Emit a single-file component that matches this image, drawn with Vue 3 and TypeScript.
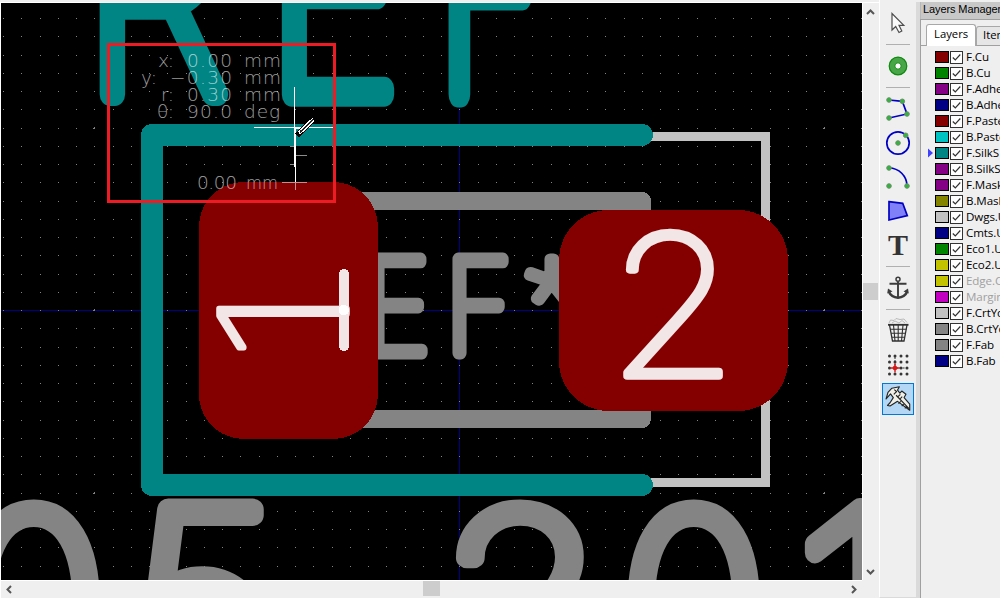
<script setup lang="ts">
import { computed } from 'vue'

interface Glyph {
  ch: string
  // box of the stroke centre lines
  x: number
  y: number
  w: number
  h: number
  pen: number
  kind: 'silk' | 'fab' | 'pad'
  family?: string
  rotate?: boolean
}

interface Layer {
  name: string
  color: string
  dim?: boolean
  active?: boolean
}

const glyphs: Glyph[] = [
  { ch: 'R', x: 112.5, y: -103.5, w: 104, h: 193.5, pen: 27, kind: 'silk' },
  { ch: 'E', x: 294.5, y: -103.5, w: 87, h: 194, pen: 27, kind: 'silk' },
  { ch: 'F', x: 459.5, y: -103.5, w: 69, h: 193.5, pen: 27, kind: 'silk' },
  { ch: '0', x: -20, y: 510.5, w: 108, h: 181, pen: 27, kind: 'fab' },
  { ch: '5', x: 155, y: 511.5, w: 102, h: 181, pen: 27, kind: 'fab' },
  { ch: '2', x: 464, y: 510.5, w: 116, h: 181, pen: 27, kind: 'fab' },
  { ch: '0', x: 640, y: 510.5, w: 108, h: 181, pen: 27, kind: 'fab' },
  { ch: '1', x: 817, y: 511.5, w: 51, h: 220, pen: 27, kind: 'fab' },
  { ch: 'E', x: 377.5, y: 260.5, w: 43, h: 90.5, pen: 14.7, kind: 'fab' },
  { ch: 'F', x: 459.5, y: 260.5, w: 43, h: 90.5, pen: 14.7, kind: 'fab' },
  { ch: '*', x: 530.5, y: 260.5, w: 40, h: 38, pen: 14.7, kind: 'fab', family: 'Roboto' }
]

const padNumbers: Glyph[] = [
  { ch: '1', x: 220, y: 310, w: 124, h: 36, pen: 10, kind: 'pad', rotate: true },
  { ch: '2', x: 627.5, y: 233, w: 88, h: 140, pen: 12, kind: 'pad' }
]

const ctx = document.createElement('canvas').getContext('2d')!

function fit(g: Glyph) {
  const family = `${g.family ?? 'Inter'}, Roboto, 'DejaVu Sans', sans-serif`
  ctx.font = `100 1000px ${family}`
  const bar = ctx.measureText('I')
  const stem = bar.actualBoundingBoxRight + bar.actualBoundingBoxLeft
  const m = ctx.measureText(g.ch)
  const left = -m.actualBoundingBoxLeft + stem / 2
  const top = -m.actualBoundingBoxAscent + stem / 2
  const inkW = m.actualBoundingBoxRight + m.actualBoundingBoxLeft - stem
  const inkH = m.actualBoundingBoxDescent + m.actualBoundingBoxAscent - stem
  const sx = (g.rotate ? g.h : g.w) / inkW
  const sy = (g.rotate ? g.w : g.h) / inkH
  const origin = g.rotate
    ? `translate(${g.x} ${g.y + g.h}) rotate(-90)`
    : `translate(${g.x} ${g.y})`
  return {
    ...g,
    family,
    transform: `${origin} scale(${sx} ${sy}) translate(${-left} ${-top})`,
    pen: g.pen - 0.65 * stem * (sx + sy) / 2
  }
}

const boardText = glyphs.map(fit)
const padText = padNumbers.map(fit)

const gridDots = computed(() => {
  let d = ''
  for (let i = 0; i < 48; i++) {
    for (let j = 0; j < 31; j++) {
      const x = Math.floor(3.5 + 18.25 * i)
      const y = Math.floor(18.5 + 18.25 * j)
      d += `M${x} ${y}h1v1h-1z`
      if (i % 20 === 5 && j % 10 === 6) d += `M${x - 1} ${y}h2v1h-2zM${x} ${y - 1}h1v1h-1z`
    }
  }
  return d
})

const layers: Layer[] = [
  { name: 'F.Cu', color: '#840000' },
  { name: 'B.Cu', color: '#008400' },
  { name: 'F.Adhes', color: '#840084' },
  { name: 'B.Adhes', color: '#000084' },
  { name: 'F.Paste', color: '#840000' },
  { name: 'B.Paste', color: '#00c2c2' },
  { name: 'F.SilkS', color: '#008484', active: true },
  { name: 'B.SilkS', color: '#840084' },
  { name: 'F.Mask', color: '#840084' },
  { name: 'B.Mask', color: '#848400' },
  { name: 'Dwgs.User', color: '#c2c2c2' },
  { name: 'Cmts.User', color: '#000084' },
  { name: 'Eco1.User', color: '#008400' },
  { name: 'Eco2.User', color: '#c2c200' },
  { name: 'Edge.Cuts', color: '#c2c200', dim: true },
  { name: 'Margin', color: '#c200c2', dim: true },
  { name: 'F.CrtYd', color: '#c2c2c2' },
  { name: 'B.CrtYd', color: '#848484' },
  { name: 'F.Fab', color: '#848484' },
  { name: 'B.Fab', color: '#000084' }
]

const cols = [7.5, 13, 19, 25]
const rows = [7, 13, 19, 25]
</script>

<template>
  <div class="app">
    <div class="editor">
      <svg class="canvas" viewBox="1 3 861 577" width="861" height="577">
        <path class="axis" d="M1 310.5H862M459.5 3V580" />
        <path class="dots" :d="gridDots" />
        <path class="fab-line" d="M360 201H642V419H360" />
        <path class="court" d="M640 136.5H765.5V482.5H640" />
        <text
          v-for="(g, i) in boardText"
          :key="i"
          class="stroke-text"
          :class="g.kind"
          :font-family="g.family"
          :stroke-width="g.pen"
          :transform="g.transform"
        >{{ g.ch }}</text>
        <path class="silk-line" d="M642 135H152V485H642" />
        <rect class="pad-shape" x="199" y="182" width="179" height="257" rx="45" />
        <rect class="pad-shape" x="559" y="210" width="229" height="201" rx="50" />
        <text
          v-for="(g, i) in padText"
          :key="'p' + i"
          class="stroke-text"
          :class="g.kind"
          :font-family="g.family"
          :stroke-width="g.pen"
          :transform="g.transform"
        >{{ g.ch }}</text>
        <path class="pad-foot" d="M344 274V346" />
        <path class="pad-joint" d="M343.500 310H344" />
        <g class="readout">
          <text x="158" y="67" textLength="16">x:</text>
          <text x="187" y="67" textLength="45">0.00</text>
          <text x="244" y="67" textLength="37">mm</text>
          <text x="141" y="84" textLength="16">y:</text>
          <text x="170" y="84" textLength="62">−0.30</text>
          <text x="244" y="84" textLength="37">mm</text>
          <text x="161" y="101" textLength="13">r:</text>
          <text x="187" y="101" textLength="45">0.30</text>
          <text x="244" y="101" textLength="37">mm</text>
          <text x="157" y="118" textLength="17">θ:</text>
          <text x="187" y="118" textLength="45">90.0</text>
          <text x="244" y="118" textLength="36">deg</text>
          <text x="197" y="189" textLength="40">0.00</text>
          <text x="246" y="189" textLength="32" lengthAdjust="spacingAndGlyphs">mm</text>
        </g>
        <path class="ruler-dim" d="M290 146.5H294M296 155.5H307M290 164.5H294M282 182.5H307M295.5 183V190" />
        <path class="cross" d="M294.5 87V167M254 127.5H333M295.5 128V182M294 128.5H302" />
        <path class="pencil-edge" d="M297 135.500L313 119.500" />
        <path class="pencil" d="M299 133L313.500 119.500" />
        <path class="pencil-core" d="M300 132L313 120" />
        <rect class="callout" x="108.500" y="44.500" width="226" height="157" />
      </svg>
      <div class="vbar">
        <svg width="9" height="6" viewBox="0 0 9 6"><path d="M1 5L4.500 1.500L8 5" /></svg>
        <div class="vthumb"></div>
        <svg width="9" height="6" viewBox="0 0 9 6"><path d="M1 1L4.500 4.500L8 1" /></svg>
      </div>
      <div class="hbar">
        <svg width="6" height="9" viewBox="0 0 6 9"><path d="M5 1L1.500 4.500L5 8" /></svg>
        <div class="hthumb"></div>
        <svg width="6" height="9" viewBox="0 0 6 9"><path d="M1 1L4.500 4.500L1 8" /></svg>
      </div>
    </div>

    <div class="toolbar">
      <div class="tool">
        <svg viewBox="0 0 32 32"><path d="M10 6.500V23L13.700 19.500L17 25.500L19.800 24L17 18.300H21.800Z" fill="#fafafa" stroke="#4d4d4d" stroke-width="1.200" /></svg>
      </div>
      <div class="sep"></div>
      <div class="tool">
        <svg viewBox="0 0 32 32">
          <circle cx="16" cy="16" r="6" fill="none" stroke="#48a648" stroke-width="6" />
          <circle cx="16" cy="16" r="8.800" fill="none" stroke="#0e8a0e" stroke-width="1.200" />
          <circle cx="16" cy="16" r="3.200" fill="#fff" stroke="#0e8a0e" stroke-width="1" />
        </svg>
      </div>
      <div class="sep"></div>
      <div class="tool">
        <svg viewBox="0 0 32 32">
          <path class="blue" d="M7 7L20.300 8.300L25 21L7 25" />
          <g class="node"><circle cx="7" cy="7" r="2.300" /><circle cx="20.300" cy="8.300" r="2.300" /><circle cx="25" cy="21" r="2.300" /><circle cx="7" cy="25" r="2.300" /></g>
        </svg>
      </div>
      <div class="tool">
        <svg viewBox="0 0 32 32">
          <circle class="blue" cx="16" cy="16" r="11.200" />
          <g class="node"><circle cx="16" cy="16" r="2.300" /><circle cx="23.700" cy="8.300" r="2.300" /></g>
        </svg>
      </div>
      <div class="tool">
        <svg viewBox="0 0 32 32">
          <path class="blue" d="M7 7A18 18 0 0 1 25 25" />
          <g class="node"><circle cx="7" cy="7" r="2.300" /><circle cx="7" cy="25" r="2.300" /><circle cx="25" cy="25" r="2.300" /></g>
        </svg>
      </div>
      <div class="tool">
        <svg viewBox="0 0 32 32"><path d="M7 6.700L20.700 8.300L25.300 20.700L7 25Z" fill="#8080f8" stroke="#0000c0" stroke-width="1.700" /></svg>
      </div>
      <div class="tool">
        <svg viewBox="0 0 32 32"><text class="tee" x="16" y="26" text-anchor="middle">T</text></svg>
      </div>
      <div class="sep"></div>
      <div class="tool">
        <svg viewBox="0 0 32 32" fill="none" stroke="#3c3c3c">
          <circle cx="16" cy="7.300" r="2" stroke-width="1.500" />
          <path d="M16 9.500V25M7.500 11.800H24.500" stroke-width="1.900" />
          <path d="M7 20C9 24.500 13 25.500 16 25.800C19 25.500 23 24.500 25 20" stroke-width="2.600" />
          <path d="M5.200 21.500L6 16.500L10.500 19.500ZM26.800 21.500L26 16.500L21.500 19.500Z" fill="#3c3c3c" stroke="none" />
        </svg>
      </div>
      <div class="sep"></div>
      <div class="tool">
        <svg viewBox="0 0 32 32" fill="none" stroke="#303030">
          <path d="M7 8L8.500 5L12 5.500L14 3.500L18 4.500L22 4L25 7.500M10 8L13 6L17 8L20 5.500L23 8" stroke="#b4b4b4" stroke-width="0.900" />
          <path d="M6 9.800H26.500" stroke-width="1.800" />
          <path d="M7.500 10L10.500 26H22L25 10" stroke-width="1.300" />
          <path d="M11.500 10L13 26M16.200 10V26M21 10L19.500 26M8 14.300H24.500M9 18.300H23.500M10 22.200H22.500" stroke-width="1.100" />
        </svg>
      </div>
      <div class="tool">
        <svg viewBox="0 0 32 32">
          <template v-for="r in rows" :key="r">
            <circle v-for="c in cols" :key="c" :cx="c" :cy="r" r="1.500" fill="#353535" />
          </template>
          <path d="M13 8V18M14 19H25" stroke="#353535" stroke-width="1" stroke-dasharray="2 1.300" />
          <path d="M13 14.500V23.500M8.500 19H17.500" stroke="#d81818" stroke-width="1.400" />
          <circle cx="13" cy="19" r="2.300" fill="#d81818" />
        </svg>
      </div>
      <div class="tool selected">
        <svg viewBox="0 0 32 32" stroke="#222" stroke-linejoin="round">
          <path d="M3.300 16L5.300 9L9.500 4.500L17.500 3L15.500 6.500L18 9.800L20 7.500L24.500 11L22.500 14.500L28.500 21.500V28L15.500 18.500L7.500 23.500L4.800 22.800L7.500 20L11 14.500L8 10.500Z" fill="#f0efe8" stroke-width="1.200" />
          <path d="M12 6L14.500 8L11.500 11M14 12L28 26.500M16.500 21L19 18.500M20 23.500L22.300 21M23.300 26L25.500 23.500M16 13.500L18.500 11M18.500 15.500L20.500 13.500" fill="none" stroke-width="1.200" />
        </svg>
      </div>
    </div>

    <div class="dock">
      <div class="caption">Layers Manager</div>
      <div class="tabs">
        <div class="tab on">Layers</div>
        <div class="tab">Items</div>
      </div>
      <div class="list">
        <div v-for="l in layers" :key="l.name" class="row" :class="{ dim: l.dim }">
          <svg class="arrow" width="6" height="10" viewBox="0 0 6 10"><path v-if="l.active" d="M0 0.500L5 5L0 9.500Z" fill="#4040ff" /></svg>
          <svg class="swatch" width="14" height="12" viewBox="0 0 14 12"><rect x="0.500" y="0.500" width="13" height="11" :fill="l.color" stroke="#000" /></svg>
          <svg class="check" width="13" height="13" viewBox="0 0 13 13"><rect x="0.500" y="0.500" width="12" height="12" fill="#fff" stroke="#333" /><path d="M2.800 6.500L5.300 9L10.300 3.500" fill="none" stroke="#333" stroke-width="1.200" /></svg>
          <span class="name">{{ l.name }}</span>
        </div>
      </div>
    </div>
  </div>
</template>

<style>
body {
  margin: 0;
  overflow: hidden;
}
</style>

<style scoped>
.app {
  display: grid;
  grid-template-columns: 879px 37px 1fr;
  width: 1000px;
  height: 598px;
  overflow: hidden;
  background: #efefef;
  font-family: 'Open Sans', 'Noto Sans', sans-serif;
}
.editor {
  display: grid;
  grid-template-columns: 861px 17px;
  grid-template-rows: 577px 1fr;
  box-sizing: border-box;
  margin-top: 2px;
  height: 596px;
  border-top: 1px solid #fff;
  border-left: 1px solid #fff;
}
.canvas {
  display: block;
  background: #000;
  shape-rendering: crispEdges;
}
.dots { fill: #848484; }
.axis { stroke: #000084; fill: none; }
.fab-line { fill: none; stroke: #848484; stroke-width: 18; stroke-linejoin: round; }
.court { fill: none; stroke: #c2c2c2; stroke-width: 9; }
.silk-line { fill: none; stroke: #008484; stroke-width: 22; stroke-linejoin: round; stroke-linecap: round; }
.pad-shape { fill: #840000; }
.pad-foot { fill: none; stroke: #f2e6e6; stroke-width: 10; stroke-linecap: round; }
.pad-joint { fill: none; stroke: #fff; stroke-width: 10; stroke-linecap: round; }
.stroke-text {
  font-size: 1000px;
  font-weight: 100;
  stroke-linejoin: round;
  stroke-linecap: round;
  vector-effect: non-scaling-stroke;
}
.silk { fill: #008484; stroke: #008484; }
.fab { fill: #848484; stroke: #848484; }
.pad { fill: #f2e6e6; stroke: #f2e6e6; }
.readout {
  font: 200 18.5px 'DejaVu Sans', sans-serif;
  fill: rgba(255, 255, 255, 0.62);
}
.ruler-dim { stroke: rgba(255, 255, 255, 0.55); fill: none; }
.cross { stroke: #fff; fill: none; }
.pencil-edge { stroke: #000; stroke-width: 5; }
.pencil { stroke: #fff; stroke-width: 4; }
.pencil-core { stroke: #222; stroke-width: 1.500; }
.callout { fill: none; stroke: #ed1c24; stroke-width: 3; }
.vbar {
  display: flex;
  flex-direction: column;
  align-items: center;
  justify-content: space-between;
  box-sizing: border-box;
  padding: 6px 1px 5px 0;
  border-left: 1px solid #fff;
}
.vbar path,
.hbar path { fill: none; stroke: #555; stroke-width: 2; }
.vthumb { width: 15px; height: 17px; background: #cdcdcd; margin-bottom: 1px; }
.hbar {
  display: flex;
  align-items: center;
  justify-content: space-between;
  box-sizing: border-box;
  padding: 0 5px 1px 5px;
  border-top: 1px solid #fff;
}
.hthumb { width: 17px; height: 15px; background: #cdcdcd; margin-bottom: 1px; }
.toolbar {
  box-sizing: border-box;
  padding: 6px 2px 0;
  border-left: 1px solid #fff;
  border-bottom: 1px solid #dadada;
}
.tool {
  display: flex;
  align-items: center;
  justify-content: center;
  height: 34px;
}
.tool svg { width: 32px; height: 32px; flex: none; }
.selected svg {
  box-sizing: border-box;
  background: #b3d7f5;
  border: 1px solid #0078d7;
}
.sep {
  width: 24px;
  height: 1px;
  margin: 4px auto;
  background: #b0b0b0;
}
.blue { fill: none; stroke: #0000c4; stroke-width: 1.700; }
.node { fill: #2fb43c; stroke: #6c8f6c; stroke-width: 1; }
.tee { font: bold 30px 'Liberation Serif', serif; fill: #333; }
.dock {
  box-sizing: border-box;
  margin-top: 2px;
  border-left: 4px solid #dadada;
  overflow: hidden;
  font-size: 11.6px;
  color: #000;
  white-space: nowrap;
}
.caption {
  height: 17px;
  padding-left: 2px;
  border-left: 1px solid #b8b8b8;
  background: #c8c8c8;
  font: 11px/15px 'Liberation Sans', sans-serif;
  letter-spacing: -0.1px;
}
.tabs {
  display: flex;
  align-items: flex-end;
  height: 27px;
  box-sizing: border-box;
  padding-left: 5px;
  border-left: 1px solid #a0a0a0;
  border-top: 1px solid #a0a0a0;
  border-bottom: 1px solid #a0a0a0;
}
.tab {
  box-sizing: border-box;
  flex: none;
  width: 50px;
  height: 19px;
  padding-left: 6px;
  border: 1px solid #a8a8a8;
  border-bottom: 0;
  border-radius: 3px 3px 0 0;
  background: #e6e6e6;
  font-size: 11.3px;
  line-height: 15px;
}
.on {
  height: 22px;
  padding-left: 7px;
  margin-bottom: -1px;
  background: #fff;
  line-height: 18px;
}
.list {
  height: 550px;
  padding-top: 3px;
  border-left: 1px solid #a0a0a0;
}
.row {
  display: flex;
  align-items: center;
  height: 16px;
  padding-left: 7px;
}
.row svg { flex: none; }
.swatch { margin-left: 1px; }
.check { margin-left: 1px; }
.name { margin-left: 3px; line-height: 16px; letter-spacing: -0.1px; }
.dim { color: #a0a0a0; }
</style>
